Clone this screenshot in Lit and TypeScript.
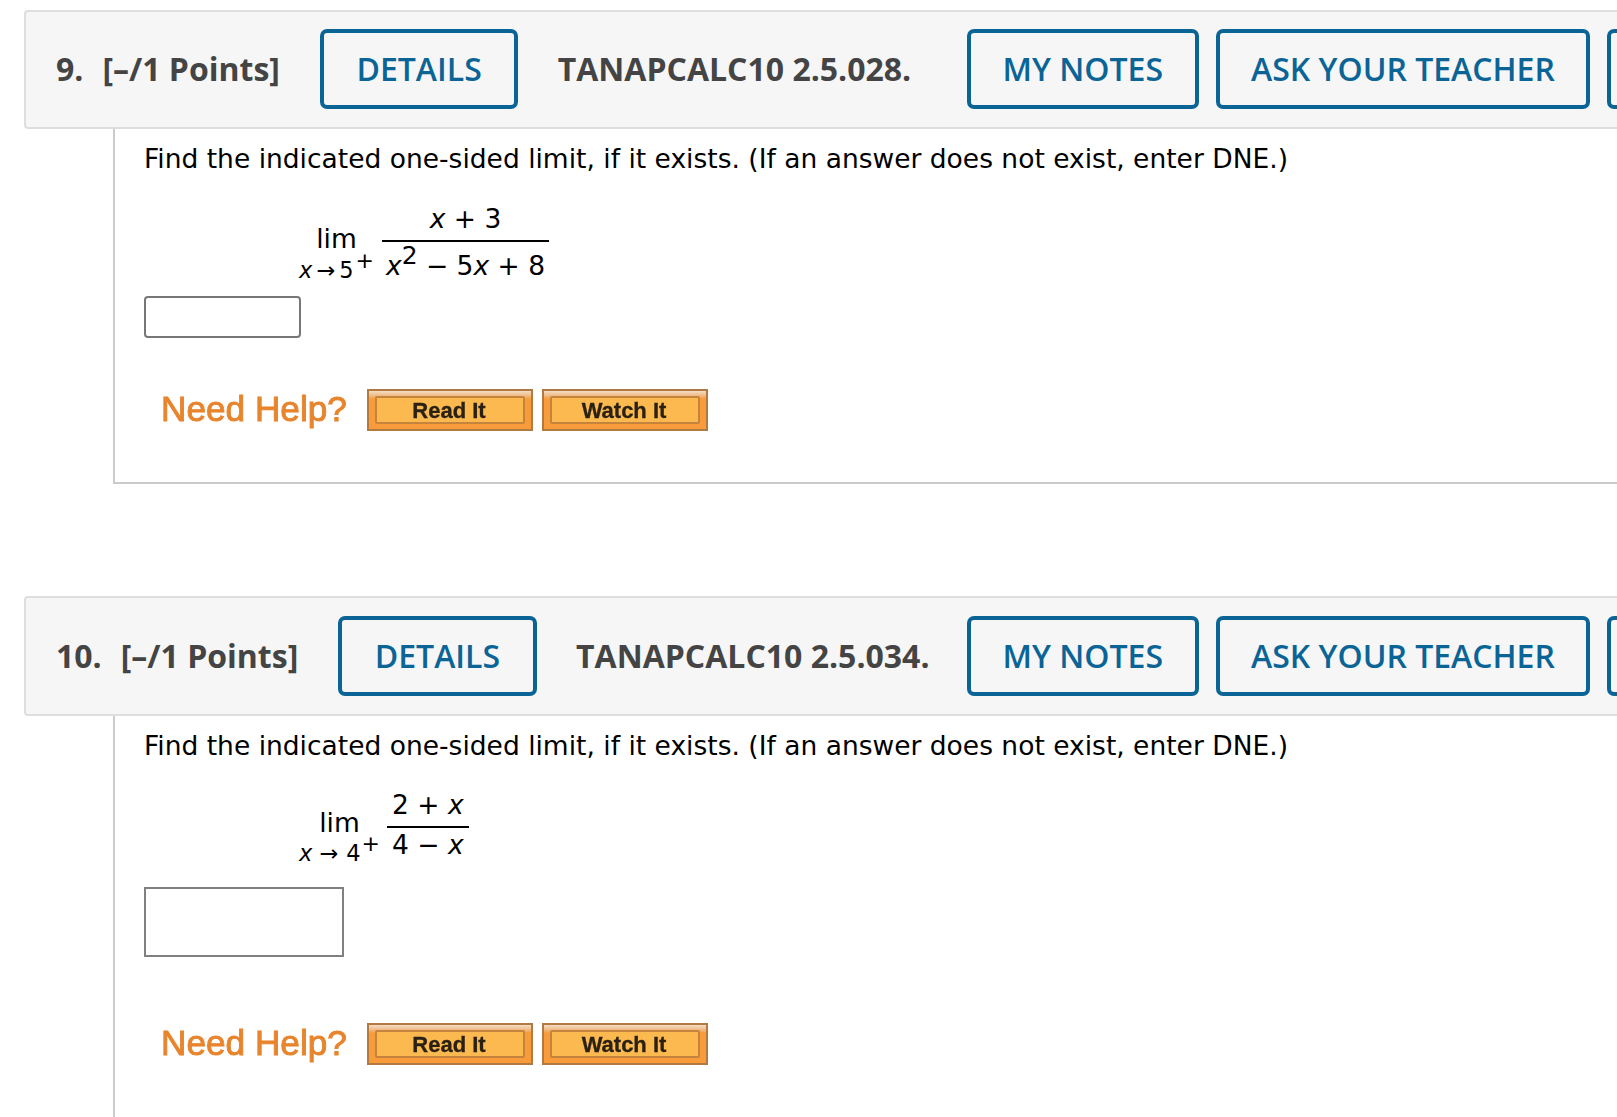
import {css, html, LitElement} from "lit"
import {customElement, property} from "lit/decorators.js"

const PROMPT =
  "Find the indicated one-sided limit, if it exists. (If an answer does not exist, enter DNE.)"

@customElement("question-card")
export class QuestionCard extends LitElement {
  static styles = css`
    :host {
      display: block;
    }
    .head {
      box-sizing: border-box;
      width: 1760px;
      height: 119px;
      margin-left: 24px;
      padding-bottom: 1px;
      display: flex;
      align-items: center;
      background: #f6f6f6;
      border: 2px solid #dedede;
      border-radius: 4px;
      font-family: "Open Sans", sans-serif;
      font-size: 32px;
      line-height: 40px;
      color: #444;
    }
    .q10 .head {
      height: 120px;
      padding-bottom: 0;
    }
    .left {
      box-sizing: border-box;
      flex: 0 0 941px;
      display: flex;
      align-items: center;
      padding-left: 30px;
    }
    .num {
      font-weight: 700;
      margin-right: 19px;
    }
    .points {
      font-weight: 700;
      margin-right: 40px;
    }
    .title {
      font-weight: 700;
      margin-left: 39.5px;
    }
    .right {
      display: flex;
      gap: 17px;
    }
    .btn {
      box-sizing: border-box;
      height: 80px;
      padding: 0 31.5px;
      display: flex;
      align-items: center;
      border: 4px solid #0b6496;
      border-radius: 7px;
      color: #0b6496;
      font-weight: 600;
      white-space: nowrap;
    }
    .btn.details {
      padding: 0 32.5px;
    }
    .btn.cut {
      width: 120px;
    }
    .body {
      box-sizing: border-box;
      margin-left: 113px;
      padding: 8px 0 0 29px;
      border-left: 2px solid #cbcbcb;
      font-family: "DejaVu Sans", sans-serif;
      color: #000;
    }
    .body.closed {
      height: 355px;
      border-bottom: 2px solid #cbcbcb;
    }
    .body.open {
      height: 402px;
    }
    .prompt {
      font-size: 26.5px;
      line-height: 44px;
      white-space: nowrap;
    }
    .math {
      display: flex;
      align-items: flex-start;
      font-size: 26.5px;
      line-height: 36px;
      margin-left: 155px;
    }
    .q9 .math {
      margin-top: 20px;
      height: 95px;
    }
    .q10 .math {
      margin-top: 19px;
      height: 100px;
    }
    .limit {
      display: flex;
      flex-direction: column;
      align-items: center;
    }
    .q9 .limit {
      margin-top: 20px;
    }
    .q10 .limit {
      margin-top: 18px;
    }
    .lim {
      line-height: 36px;
    }
    .q10 .lim {
      line-height: 35px;
    }
    .under {
      font-size: 22.5px;
      line-height: 26px;
      display: flex;
      align-items: baseline;
      gap: 4px;
    }
    .q10 .arrow {
      margin: 0 4px 0 3px;
    }
    .plus {
      font-size: 22px;
      line-height: 0;
      position: relative;
      top: -10px;
      margin-left: -2px;
    }
    .q10 .plus {
      margin-left: -3px;
    }
    .frac {
      display: flex;
      flex-direction: column;
      align-items: center;
      margin-left: 8px;
    }
    .q10 .frac {
      margin-left: 7px;
    }
    .num-line {
      padding: 0 4px 3px;
      white-space: pre;
    }
    .den-line {
      padding: 0 4px;
      border-top: 2px solid #000;
      white-space: pre;
    }
    .q10 .num-line {
      padding: 0 5px 3px;
    }
    .q9 .den-line {
      padding-top: 6px;
    }
    .q10 .den-line {
      padding: 0 5px;
      line-height: 34px;
    }
    i {
      font-style: oblique;
    }
    sup {
      font-size: 25px;
      line-height: 0;
      vertical-align: 11px;
    }
    .answer {
      box-sizing: border-box;
      border: 2px solid #777;
      background: #fff;
    }
    .q9 .answer {
      width: 157px;
      height: 42px;
      border-radius: 4px;
    }
    .q10 .answer {
      width: 200px;
      height: 70px;
      border-color: #808080;
    }
    .help {
      display: flex;
      align-items: center;
      margin-left: 17px;
    }
    .q9 .help {
      margin-top: 51px;
    }
    .q10 .help {
      margin-top: 66px;
    }
    .need {
      width: 206px;
      padding-bottom: 2px;
      font-family: "Liberation Sans", sans-serif;
      font-size: 35.2px;
      color: #e8842c;
      -webkit-text-stroke: 0.9px #e8842c;
      filter: blur(0.6px);
    }
    .img-btn {
      box-sizing: border-box;
      width: 166px;
      height: 42px;
      margin-right: 9px;
      padding: 5px 6px;
      display: flex;
      background: linear-gradient(#f3dcc4 0, #f0c090 4px, #f89b3a 8px, #f89b3a 100%);
      border: 2px solid #b07a40;
      filter: blur(0.5px);
    }
    .img-inner {
      flex: 1;
      display: flex;
      align-items: center;
      justify-content: center;
      padding: 2px 2px 0 0;
      background: #fbb94f;
      border: 2px solid #c4843e;
      border-radius: 2px;
      font-family: "Liberation Sans", sans-serif;
      font-size: 22px;
      font-weight: 700;
      color: #2a2114;
      -webkit-text-stroke: 0.3px #2a2114;
    }
  `

  @property() num = ""
  @property() code = ""
  @property() variant = "q9"

  private renderMath() {
    if (this.variant === "q9") {
      return html`<div class="math">
        <div class="limit">
          <span class="lim">lim</span>
          <span class="under"><i>x</i><span class="arrow">→</span><span>5</span><span class="plus">+</span></span>
        </div>
        <div class="frac">
          <div class="num-line"><i>x</i> + 3</div>
          <div class="den-line"><i>x</i><sup>2</sup> − 5<i>x</i> + 8</div>
        </div>
      </div>`
    }
    return html`<div class="math">
      <div class="limit">
        <span class="lim">lim</span>
        <span class="under"><i>x</i><span class="arrow">→</span><span>4</span><span class="plus">+</span></span>
      </div>
      <div class="frac">
        <div class="num-line">2 + <i>x</i></div>
        <div class="den-line">4 − <i>x</i></div>
      </div>
    </div>`
  }

  render() {
    return html`
      <div class=${this.variant}>
        <div class="head">
          <div class="left">
            <span class="num">${this.num}</span>
            <span class="points">[–/1 Points]</span>
            <span class="btn details">DETAILS</span>
            <span class="title">${this.code}</span>
          </div>
          <div class="right">
            <span class="btn">MY NOTES</span>
            <span class="btn">ASK YOUR TEACHER</span>
            <span class="btn cut"></span>
          </div>
        </div>
        <div class="body ${this.variant === "q9" ? "closed" : "open"}">
          <div class="prompt">${PROMPT}</div>
          ${this.renderMath()}
          <div class="answer"></div>
          <div class="help">
            <span class="need">Need Help?</span>
            <div class="img-btn"><div class="img-inner">Read It</div></div>
            <div class="img-btn"><div class="img-inner">Watch It</div></div>
          </div>
        </div>
      </div>
    `
  }
}

@customElement("app-root")
export class AppRoot extends LitElement {
  static styles = css`
    :host {
      display: block;
      width: 1617px;
      height: 1117px;
      overflow: hidden;
      background: #fff;
    }
    .page {
      display: flex;
      flex-direction: column;
      gap: 112px;
      padding-top: 10px;
    }
  `

  render() {
    return html`
      <div class="page">
        <question-card num="9." code="TANAPCALC10 2.5.028." variant="q9"></question-card>
        <question-card num="10." code="TANAPCALC10 2.5.034." variant="q10"></question-card>
      </div>
    `
  }
}
